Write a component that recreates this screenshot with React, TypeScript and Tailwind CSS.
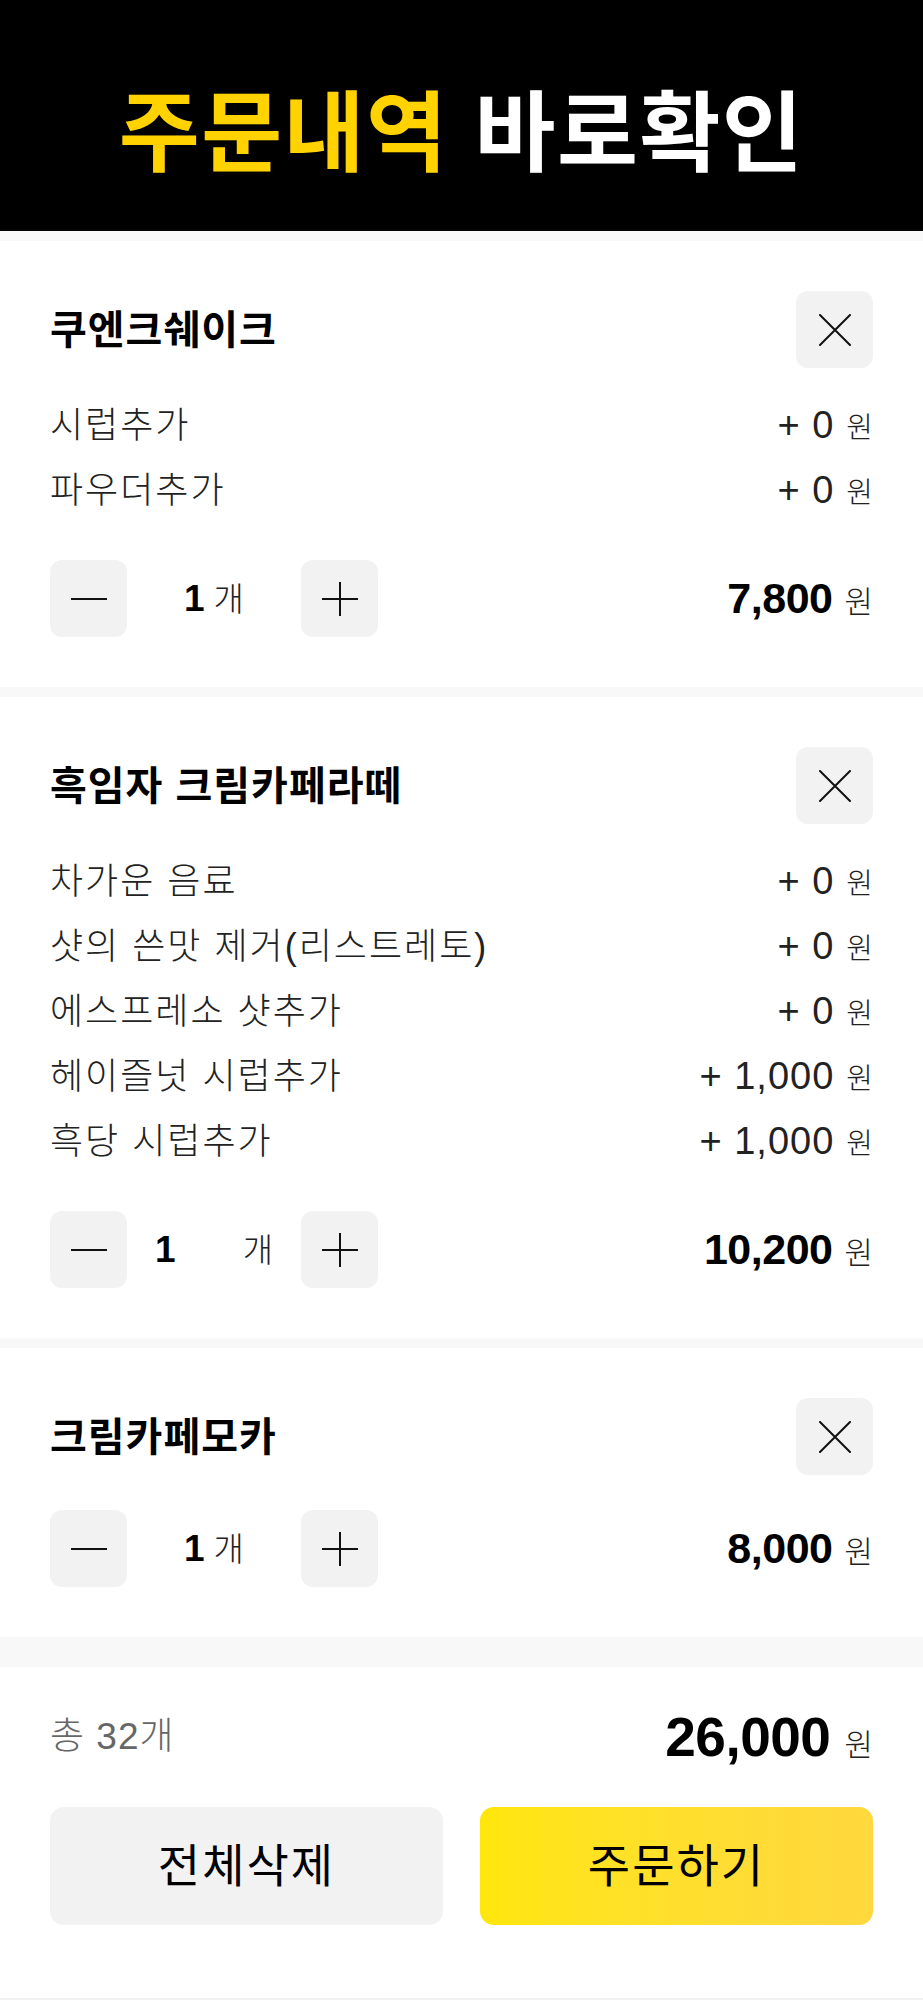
import React from 'react';

interface Option {
  name: string;
  price: string;
}

interface CartItem {
  id: number;
  name: string;
  options: Option[];
  qty: number;
  total: string;
  spread?: boolean;
}

const items: CartItem[] = [
  {
    id: 1,
    name: '쿠엔크쉐이크',
    options: [
      { name: '시럽추가', price: '0' },
      { name: '파우더추가', price: '0' },
    ],
    qty: 1,
    total: '7,800',
  },
  {
    id: 2,
    name: '흑임자 크림카페라떼',
    options: [
      { name: '차가운 음료', price: '0' },
      { name: '샷의 쓴맛 제거(리스트레토)', price: '0' },
      { name: '에스프레소 샷추가', price: '0' },
      { name: '헤이즐넛 시럽추가', price: '1,000' },
      { name: '흑당 시럽추가', price: '1,000' },
    ],
    qty: 1,
    total: '10,200',
    spread: true,
  },
  { id: 3, name: '크림카페모카', options: [], qty: 1, total: '8,000' },
];

const font = { fontFamily: '"Liberation Sans", "Noto Sans CJK KR", sans-serif' };

function IconButton({ children }: { children: React.ReactNode }) {
  return (
    <button className="w-[77px] h-[77px] shrink-0 rounded-[12px] bg-[#f2f2f2] flex items-center justify-center">
      {children}
    </button>
  );
}

function CloseIcon() {
  return (
    <svg width="34" height="32" viewBox="0 0 34 32" fill="none" stroke="#111" strokeWidth="2" strokeLinecap="round">
      <path d="M2 1 L32 31 M32 1 L2 31" />
    </svg>
  );
}

function MinusIcon() {
  return (
    <svg width="36" height="4" viewBox="0 0 36 4" fill="none" stroke="#111" strokeWidth="2.2">
      <path d="M0 2 H36" />
    </svg>
  );
}

function PlusIcon() {
  return (
    <svg width="36" height="34" viewBox="0 0 36 34" fill="none" stroke="#111" strokeWidth="2">
      <path d="M0 17 H36 M18 0 V34" />
    </svg>
  );
}

function ItemCard({ item }: { item: CartItem }) {
  return (
    <div className="bg-white px-[50px] py-[50px]">
      {/* name + remove */}
      <div className="flex items-center justify-between">
        <h3 className="text-[40px] font-bold text-black tracking-[1px]">{item.name}</h3>
        <IconButton>
          <CloseIcon />
        </IconButton>
      </div>

      {/* options */}
      {item.options.length > 0 ? (
        <div className="mt-[25px] mb-[37px]">
          {item.options.map((opt) => (
            <div key={opt.name} className="h-[65px] flex items-center justify-between">
              <span className="text-[36px] font-light text-[#222] tracking-[2px]">{opt.name}</span>
              <span className="flex items-baseline text-[#222]">
                <span className="text-[38px] font-light tracking-[1px]">+ {opt.price}</span>
                <span className="text-[29px] font-light ml-[12px]">원</span>
              </span>
            </div>
          ))}
        </div>
      ) : (
        <div className="h-[35px]" />
      )}

      {/* quantity + price */}
      <div className="flex items-center justify-between">
        <div className="flex items-center">
          <IconButton>
            <MinusIcon />
          </IconButton>
          <div
            className={`w-[174px] flex items-baseline ${item.spread ? 'justify-between px-[28px]' : 'justify-center gap-[9px]'}`}
          >
            <span className="text-[37px] font-bold text-black">{item.qty}</span>
            <span className="text-[33px] font-light text-[#222]">개</span>
          </div>
          <IconButton>
            <PlusIcon />
          </IconButton>
        </div>
        <div className="flex items-baseline">
          <span className="text-[43px] font-bold text-black tracking-[-0.5px]">{item.total}</span>
          <span className="text-[31px] font-light text-[#222] ml-[12px]">원</span>
        </div>
      </div>
    </div>
  );
}

export default function App() {
  return (
    <div className="w-[923px] bg-[#f8f8f8]" style={font}>
      {/* header */}
      <div className="h-[231px] bg-black flex items-center justify-center pt-[36px]">
        <h1 className="text-[88px] font-bold leading-none tracking-[1.5px]">
          <span className="text-[#ffd200]">주문내역</span>{' '}
          <span className="text-white">바로확인</span>
        </h1>
      </div>

      {/* cart items */}
      <div className="flex flex-col gap-[10px] pt-[10px]">
        {items.map((item) => (
          <ItemCard key={item.id} item={item} />
        ))}
      </div>

      {/* summary */}
      <div className="mt-[30px] bg-white px-[50px] pt-[36px] pb-[73px]">
        <div className="h-[68px] flex items-center justify-between">
          <span className="text-[37px] font-light text-[#666] tracking-[1px]">총 32개</span>
          <span className="flex items-baseline">
            <span className="text-[55px] font-bold text-black tracking-[-0.5px]">26,000</span>
            <span className="text-[31px] font-light text-[#222] ml-[14px]">원</span>
          </span>
        </div>
        <div className="mt-[36px] grid grid-cols-2 gap-[37px]">
          <button className="h-[118px] rounded-[14px] bg-[#f2f2f2] text-[46px] tracking-[2px] text-black">
            전체삭제
          </button>
          <button className="h-[118px] rounded-[14px] bg-gradient-to-r from-[#ffe60a] to-[#ffd83e] text-[46px] tracking-[2px] text-black">
            주문하기
          </button>
        </div>
      </div>
      <div className="h-[4px] bg-[#f2f2f2]" />
    </div>
  );
}
